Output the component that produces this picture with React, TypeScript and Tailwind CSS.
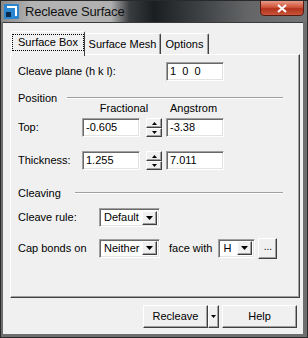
import React from 'react';

const raised =
  'border border-t-white border-l-white border-r-[#404040] border-b-[#404040] shadow-[inset_-1px_-1px_0_#a0a0a0]';
const sunken =
  'border border-t-[#a0a0a0] border-l-[#a0a0a0] border-r-white border-b-white shadow-[inset_1px_1px_0_#696969,inset_-1px_-1px_0_#e3e3e3]';

function DownArrow() {
  return (
    <svg width="7" height="4" viewBox="0 0 7 4">
      <path d="M0 0h7L3.5 4z" fill="#000" />
    </svg>
  );
}

function TextBox({ value, w = 'w-[58px]' }: { value: string; w?: string }) {
  return (
    <div className={`${sunken} ${w} h-[19px] bg-white flex items-center pl-[3px] whitespace-pre`}>{value}</div>
  );
}

function Combo({ value, w }: { value: string; w: string }) {
  return (
    <div className={`${sunken} ${w} h-[19px] bg-white flex items-center justify-between pl-[4px] pr-[2px]`}>
      <span>{value}</span>
      <div className={`${raised} w-[15px] h-[14px] bg-[#f0f0f0] flex items-center justify-center`}>
        <DownArrow />
      </div>
    </div>
  );
}

function Spin() {
  return (
    <div className="flex flex-col w-[16px] h-[19px]">
      <div className={`${raised} h-[10px] bg-[#f0f0f0] flex items-center justify-center`}>
        <svg width="5" height="3" viewBox="0 0 5 3">
          <path d="M2.5 0L5 3H0z" fill="#000" />
        </svg>
      </div>
      <div className={`${raised} h-[9px] bg-[#f0f0f0] flex items-center justify-center`}>
        <svg width="5" height="3" viewBox="0 0 5 3">
          <path d="M0 0h5L2.5 3z" fill="#000" />
        </svg>
      </div>
    </div>
  );
}

function Etched() {
  return <div className="flex-1 h-[2px] border-t border-t-[#a0a0a0] border-b border-b-white" />;
}

export default function App() {
  return (
    <div className="w-[308px] h-[338px] bg-[#6c6e70] border border-[#2a2a2a] flex flex-col font-['Liberation_Sans',Arial,sans-serif] text-[11px] text-black overflow-hidden">
      {/* Title bar */}
      <div className="h-[21px] flex items-center relative bg-[linear-gradient(90deg,#8a8a8a_0%,#b3b3b3_10%,#b0b0b0_36%,#3a3d40_42%,#1b1e21_50%,#3c3f42_64%,#626466_80%,#747678_100%)]">
        <svg width="15" height="15" viewBox="0 0 15 15" className="ml-[3px]">
          <rect x="0" y="0" width="15" height="15" rx="1" fill="#2a86d0" />
          <path d="M3 3h9v9" stroke="#fff" strokeWidth="2" fill="none" />
          <rect x="2" y="8" width="5" height="5" fill="#0c2a4a" />
        </svg>
        <span className="ml-[6px] text-[13px] tracking-[-0.2px] text-[#111]">Recleave Surface</span>
        <div className="absolute right-[3px] top-[-1px] w-[44px] h-[16px] rounded-b-[4px] border border-[#5a1a12] bg-[linear-gradient(180deg,#e79a86_0%,#d0533a_45%,#b3321c_55%,#c8553a_100%)] flex items-center justify-center">
          <svg width="10" height="9" viewBox="0 0 10 9">
            <path d="M1 1l8 7M9 1L1 8" stroke="#fff" strokeWidth="2.2" />
          </svg>
        </div>
      </div>

      {/* Client area */}
      <div className="ml-[2px] mr-[4px] h-[312px] bg-[#f0f0f0] border-t border-t-[#3a3a3a] flex flex-col pl-[7px] pr-[3px]">
        {/* Tabs */}
        <div className="mt-[8px] h-[23px] flex items-end">
          <div className="relative z-10 -mb-[2px] h-[25px] w-[74px] ml-[1px] bg-[#f0f0f0] border-t border-l border-t-white border-l-white border-r border-r-[#404040] rounded-t-[2px] flex items-start justify-center pt-[3px]">
            <span className="outline outline-1 outline-dotted outline-black px-[5px] h-[15px] leading-[15px]">Surface Box</span>
          </div>
          <div className="h-[21px] w-[76px] border-t border-t-white border-r border-r-[#404040] shadow-[inset_-1px_0_0_#a0a0a0] rounded-t-[2px] flex items-center justify-center">
            Surface Mesh
          </div>
          <div className="h-[21px] w-[48px] border-t border-t-white border-r border-r-[#404040] shadow-[inset_-1px_0_0_#a0a0a0] rounded-t-[2px] flex items-center justify-center">
            Options
          </div>
        </div>

        {/* Panel */}
        <div className={`${raised} h-[244px] w-[290px] flex flex-col pl-[7px] pr-[16px]`}>
          <div className="mt-[7px] flex items-center h-[19px]">
            <span className="w-[148px]">Cleave plane (h k l):</span>
            <TextBox value="1  0  0" />
          </div>

          <div className="mt-[12px] flex items-center h-[10px]">
            <span className="w-[49px]">Position</span>
            <Etched />
          </div>

          <div className="flex items-center h-[10px]">
            <span className="ml-[72px] w-[68px] text-center">Fractional</span>
            <span className="ml-[12px]">Angstrom</span>
          </div>

          <div className="mt-[5px] flex items-center h-[19px]">
            <span className="w-[64px]">Top:</span>
            <TextBox value="-0.605" />
            <div className="ml-[6px]">
              <Spin />
            </div>
            <div className="ml-[4px]">
              <TextBox value="-3.38" />
            </div>
          </div>

          <div className="mt-[14px] flex items-center h-[19px]">
            <span className="w-[64px]">Thickness:</span>
            <TextBox value="1.255" />
            <div className="ml-[6px]">
              <Spin />
            </div>
            <div className="ml-[4px]">
              <TextBox value="7.011" />
            </div>
          </div>

          <div className="mt-[18px] flex items-center h-[10px]">
            <span className="w-[57px]">Cleaving</span>
            <Etched />
          </div>

          <div className="mt-[10px] flex items-center h-[19px]">
            <span className="w-[81px]">Cleave rule:</span>
            <Combo value="Default" w="w-[61px]" />
          </div>

          <div className="mt-[11px] flex items-center h-[20px]">
            <span className="w-[81px]">Cap bonds on</span>
            <Combo value="Neither" w="w-[61px]" />
            <span className="ml-[9px]">face with</span>
            <div className="ml-[6px]">
              <Combo value="H" w="w-[37px]" />
            </div>
            <div className={`${raised} ml-[3px] w-[19px] h-[21px] bg-[#f0f0f0] flex items-center justify-center text-[10px] pb-[3px]`}>
              ...
            </div>
          </div>
        </div>

        {/* Buttons */}
        <div className="mt-[7px] h-[23px] flex justify-end pr-[3px]">
          <div className={`${raised} w-[65px] flex items-center justify-center`}>Recleave</div>
          <div className={`${raised} w-[11px] flex items-center justify-center`}>
            <svg width="5" height="3" viewBox="0 0 5 3">
              <path d="M0 0h5L2.5 3z" fill="#000" />
            </svg>
          </div>
          <div className={`${raised} ml-[3px] w-[75px] flex items-center justify-center`}>Help</div>
        </div>
      </div>
    </div>
  );
}
